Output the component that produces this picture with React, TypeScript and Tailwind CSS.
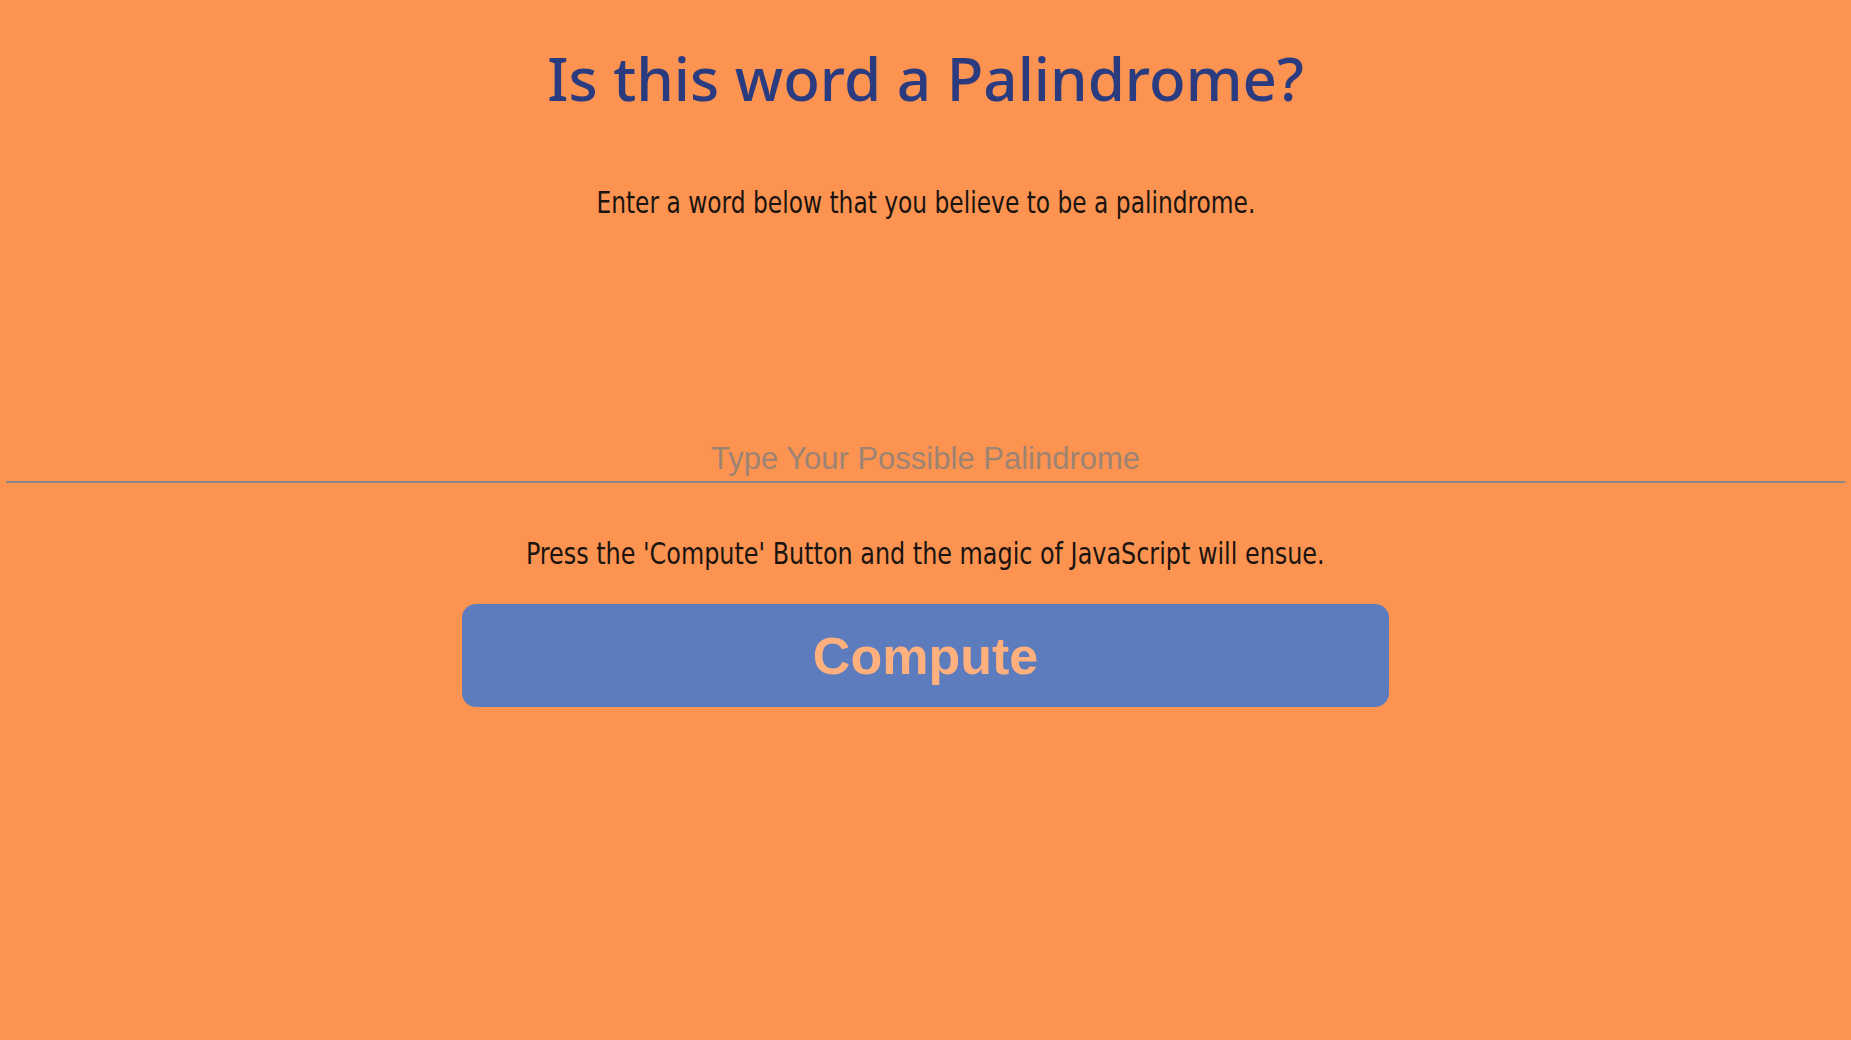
import React from "react";

export default function App() {
  return (
    <div className="min-h-screen w-full bg-[#fc9350] flex flex-col items-center">
      <h1 className="mt-[38px] h-[80px] leading-[80px] text-[60px] font-medium text-[#2a3b80] font-['Noto_Sans','Open_Sans',sans-serif]">
        Is this word a Palindrome?
      </h1>
      <p className="mt-[65px] h-[40px] leading-[40px] text-[30px] text-[#1a1410] font-['Liberation_Sans_Narrow','DejaVu_Sans_Condensed',sans-serif] scale-x-[0.865]">
        Enter a word below that you believe to be a palindrome.
      </p>
      <input
        type="text"
        placeholder="Type Your Possible Palindrome"
        className="mt-[210px] h-[50px] pt-[4px] self-stretch mx-[6px] bg-transparent border-0 border-b-2 border-[#878787] text-center text-[31px] text-[#2a2a2a] placeholder:text-[#9c8374] outline-none font-['Liberation_Sans',Arial,sans-serif]"
      />
      <p className="mt-[51px] h-[40px] leading-[40px] text-[30px] text-[#1a1410] font-['Liberation_Sans_Narrow','DejaVu_Sans_Condensed',sans-serif] scale-x-[0.885]">
        Press the 'Compute' Button and the magic of JavaScript will ensue.
      </p>
      <button className="mt-[30px] h-[103px] w-[927px] rounded-[14px] bg-[#5c7cbd] text-[#ffb07d] text-[52px] font-bold font-['Liberation_Sans',Arial,sans-serif]">
        Compute
      </button>
    </div>
  );
}
